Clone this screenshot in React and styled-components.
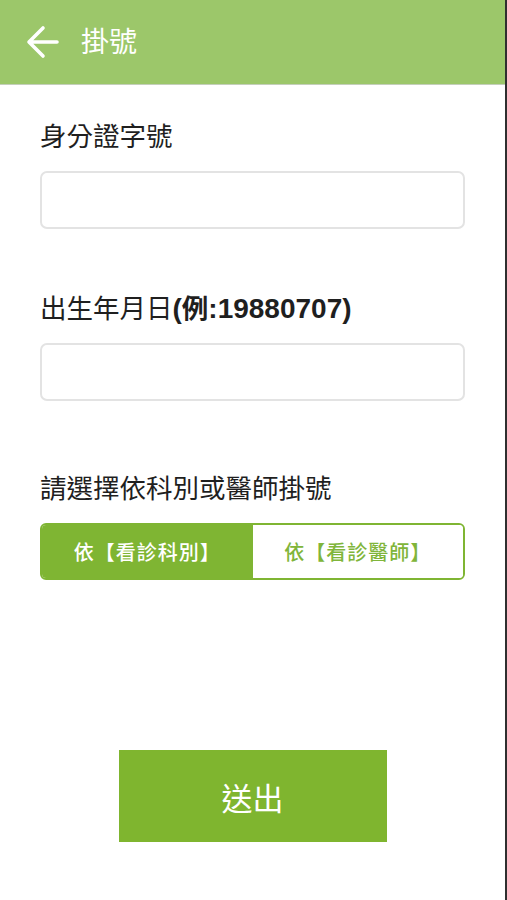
import styled, { createGlobalStyle } from "styled-components";

const GlobalStyle = createGlobalStyle`
  html, body {
    margin: 0;
    padding: 0;
    background: #ffffff;
  }

  body {
    font-family: "Liberation Sans", "Noto Sans CJK TC", sans-serif;
  }
`;

const Page = styled.div`
  width: 505px;
  min-height: 900px;
  border-right: 2px solid #2f2f2f;
  background: #ffffff;
  display: flex;
  flex-direction: column;
`;

const Header = styled.header`
  height: 84px;
  background: #9cc76a;
  border-bottom: 1px solid #c4cfba;
  display: flex;
  align-items: center;
  padding-left: 26px;
  gap: 22px;
  color: #ffffff;

  & h1 {
    margin: 0;
    font-size: 28px;
    font-weight: 400;
    line-height: 1;
    padding-top: 2px;
  }
`;

const BackButton = styled.button`
  border: none;
  background: none;
  padding: 0;
  width: 33px;
  height: 36px;
  display: flex;
  align-items: center;
  cursor: pointer;
`;

const Form = styled.form`
  display: flex;
  flex-direction: column;
  padding: 34px 40px 0 40px;
`;

const Label = styled.label`
  display: block;
  font-size: 26.5px;
  line-height: 36px;
  height: 36px;
  color: #1f1f1f;
  margin-top: ${(p) => p.$gap || 0}px;
  margin-bottom: 16px;

  & b {
    font-weight: 700;
    font-size: 28px;
    line-height: 0;
  }

  & b span {
    font-size: 26.5px;
  }
`;

const Input = styled.input`
  box-sizing: border-box;
  width: 100%;
  height: 58px;
  border: 2px solid #e3e3e3;
  border-radius: 7px;
  font-size: 20px;
  padding: 0 14px;
  outline: none;
`;

const Segment = styled.div`
  display: flex;
  height: 57px;
  border: 2px solid #7fb533;
  border-radius: 6px;
  overflow: hidden;
  box-sizing: border-box;
`;

const SegmentOption = styled.button`
  flex: 1;
  border: none;
  margin: 0;
  font-family: inherit;
  font-size: 20px;
  font-weight: 500;
  letter-spacing: 1px;
  cursor: pointer;
  background: ${(p) => (p.$active ? "#7fb533" : "#ffffff")};
  color: ${(p) => (p.$active ? "#ffffff" : "#80b53a")};
`;

const SubmitRow = styled.div`
  display: flex;
  justify-content: center;
  margin-top: 170px;
`;

const SubmitButton = styled.button`
  width: 268px;
  height: 92px;
  border: none;
  background: #7fb52f;
  color: #ffffff;
  font-family: inherit;
  font-size: 31px;
  cursor: pointer;
`;

const ArrowLeft = () => (
  <svg width="33" height="36" viewBox="0 0 33 36" fill="none">
    <path
      d="M31 18H4M17 4L3 18L17 32"
      stroke="#ffffff"
      strokeWidth="3.6"
      strokeLinecap="round"
      strokeLinejoin="round"
    />
  </svg>
);

const App = () => {
  return (
    <>
      <GlobalStyle />
      <Page>
        <Header>
          <BackButton aria-label="back">
            <ArrowLeft />
          </BackButton>
          <h1>掛號</h1>
        </Header>
        <Form onSubmit={(e) => e.preventDefault()}>
          <Label>身分證字號</Label>
          <Input type="text" />

          <Label $gap={62}>
            出生年月日
            <b>
              (<span>例</span>:19880707)
            </b>
          </Label>
          <Input type="text" />

          <Label $gap={70}>請選擇依科別或醫師掛號</Label>
          <Segment>
            <SegmentOption type="button" $active>
              依【看診科別】
            </SegmentOption>
            <SegmentOption type="button">依【看診醫師】</SegmentOption>
          </Segment>

          <SubmitRow>
            <SubmitButton type="submit">送出</SubmitButton>
          </SubmitRow>
        </Form>
      </Page>
    </>
  );
};

export default App;
